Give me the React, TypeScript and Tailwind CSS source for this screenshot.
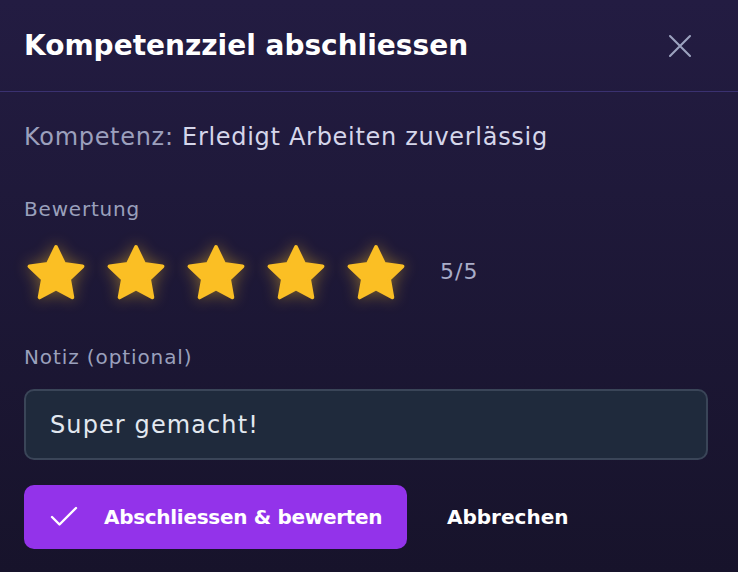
import { Check } from "lucide-react";

function Star() {
  return (
    <svg
      viewBox="0 0 24 24"
      className="h-[66px] w-[66px] drop-shadow-[0_0_8px_rgba(251,191,36,0.45)]"
    >
      <path
        d="M12 2.2l2.95 6.1 6.7.9-4.9 4.65 1.2 6.65L12 17.3l-5.95 3.2 1.2-6.65L2.35 9.2l6.7-.9z"
        fill="#fbbf24"
        stroke="#fbbf24"
        strokeWidth="1.4"
        strokeLinejoin="round"
      />
    </svg>
  );
}

export default function App() {
  return (
    <div
      className="flex h-[572px] w-[738px] flex-col bg-linear-to-b from-[#231c42] to-[#17132b] text-white"
      style={{ fontFamily: "'DejaVu Sans', sans-serif" }}
    >
      {/* header */}
      <div className="flex h-[92px] items-center justify-between border-b border-[#3a3170] pl-6 pr-[46px]">
        <h1 className="text-[28px] leading-[32px] font-bold">Kompetenzziel abschliessen</h1>
        <svg viewBox="0 0 24 24" className="h-6 w-6" fill="none" stroke="#9ca3bf" strokeWidth="2.1" strokeLinecap="round">
          <path d="M2 2l20 20M22 2L2 22" />
        </svg>
      </div>

      <div className="flex flex-col px-6">
        <p className="mt-[31px] text-[24px] leading-[28px] tracking-[0.7px]">
          <span className="text-[#9ca0bd]">Kompetenz: </span>
          <span className="text-[#d5d6ea]">Erledigt Arbeiten zuverlässig</span>
        </p>

        <p className="mt-[46px] text-[20px] leading-[24px] tracking-[0.8px] text-[#9aa0bc]">Bewertung</p>
        <div className="mt-[20px] flex items-center">
          <div className="-ml-[1px] flex gap-[14px]">
            {[1, 2, 3, 4, 5].map((i) => (
              <Star key={i} />
            ))}
          </div>
          <span className="-mt-[4px] ml-[31px] text-[22px] leading-[28px] tracking-[1px] text-[#a9adc8]">5/5</span>
        </div>

        <p className="mt-[38px] text-[20px] leading-[24px] tracking-[0.9px] text-[#9aa0bc]">Notiz (optional)</p>
        <div className="mt-[20px] flex h-[71px] w-[684px] items-center rounded-[10px] border-2 border-[#3a4558] bg-[#1f2a3c] px-[24px]">
          <span className="text-[24px] leading-[28px] tracking-[1.1px] text-[#e2e8f0]">Super gemacht!</span>
        </div>

        <div className="mt-[25px] flex items-center">
          <button className="flex h-[64px] w-[383px] items-center gap-[22px] rounded-[10px] bg-[#9333ea] pl-[22px] text-[20px] font-bold tracking-[-0.3px]">
            <Check className="h-9 w-9 shrink-0" strokeWidth={1.6} />
            Abschliessen &amp; bewerten
          </button>
          <button className="ml-[40px] text-[20px] font-bold">Abbrechen</button>
        </div>
      </div>
    </div>
  );
}
